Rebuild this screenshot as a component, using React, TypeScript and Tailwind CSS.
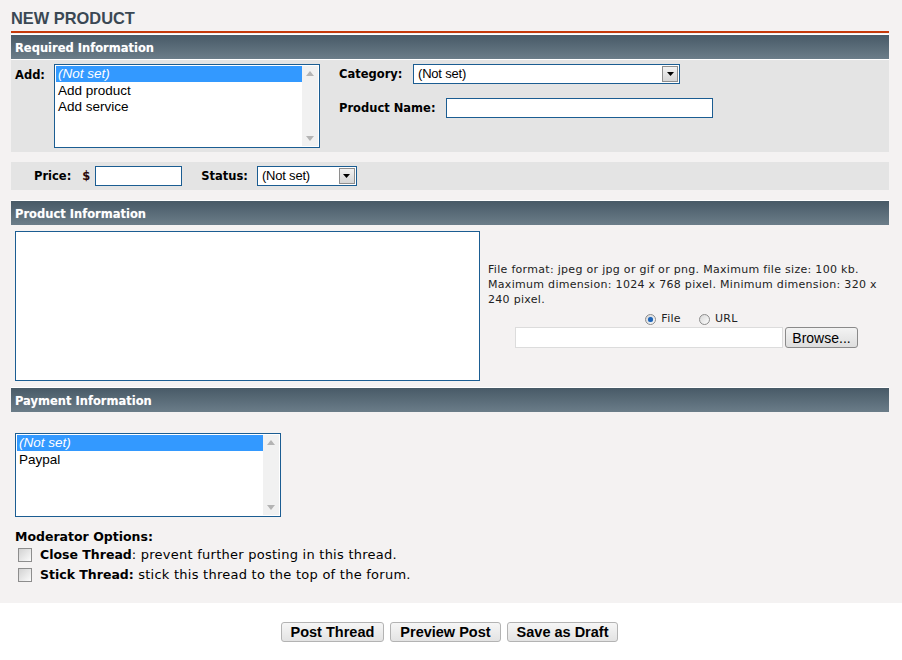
const verdana = "font-['DejaVu_Sans',Verdana,sans-serif]";
const arial = "font-['Liberation_Sans',Arial,sans-serif]";

function SectionHeader({ title }: { title: string }) {
  return (
    <div className="h-[25px] border-t border-white bg-gradient-to-b from-[#485a67] to-[#6b7d89] flex items-center pl-[4px] pt-[3px]">
      <span className={`${verdana} text-[11.5px] font-bold text-white [text-shadow:0_0_1px_rgba(255,255,255,0.35)]`}>
        {title}
      </span>
    </div>
  );
}

function ListBox({ items, className }: { items: string[]; className?: string }) {
  return (
    <div className={`w-[266px] h-[84px] border border-[#1b5d92] bg-white flex p-[1px] ${className ?? ""}`}>
      <div className={`${arial} flex-1 text-[13.5px] leading-[16px]`}>
        {items.map((it, i) =>
          i === 0 ? (
            <div key={it} className="bg-[#3399ff] text-white italic pl-[2px] h-[16px]">
              {it}
            </div>
          ) : (
            <div key={it} className="text-black pl-[2px] h-[16px] pt-[1px]">
              {it}
            </div>
          )
        )}
      </div>
      <div className="w-[16px] bg-[#f1f1f1] flex flex-col justify-between items-center py-[5px]">
        <svg width="8" height="5" viewBox="0 0 8 5">
          <path d="M0 5 L4 0 L8 5 Z" fill="#b4b4b4" />
        </svg>
        <svg width="8" height="5" viewBox="0 0 8 5">
          <path d="M0 0 L4 5 L8 0 Z" fill="#b4b4b4" />
        </svg>
      </div>
    </div>
  );
}

function Select({ width }: { width: string }) {
  return (
    <div className={`${width} h-[20px] border border-[#1b5d92] bg-white flex p-[1px]`}>
      <div className={`${arial} flex-1 text-[13px] leading-[16px] text-black pl-[3px] tracking-[-0.2px]`}>(Not set)</div>
      <div className="w-[16px] h-full bg-gradient-to-b from-[#f2f2f2] to-[#d6d6d6] border border-[#8e8e8e] flex items-center justify-center">
        <svg width="7" height="4" viewBox="0 0 7 4">
          <path d="M0 0 L7 0 L3.5 4 Z" fill="#000" />
        </svg>
      </div>
    </div>
  );
}

function Checkbox() {
  return (
    <div className="w-[14px] h-[14px] border border-[#8d8d8d] bg-gradient-to-br from-[#d2d2d2] to-[#fbfbfb] shrink-0" />
  );
}

function Radio({ checked }: { checked?: boolean }) {
  return (
    <div className="w-[11px] h-[11px] rounded-full border border-[#8c8c8c] bg-gradient-to-br from-[#d8d8d8] to-[#fdfdfd] flex items-center justify-center">
      {checked && <div className="w-[5px] h-[5px] rounded-full bg-[#1f63b5] shadow-[0_0_1px_#6aa8ea]" />}
    </div>
  );
}

function Button({ label }: { label: string }) {
  return (
    <button className={`${arial} h-[20px] px-[9px] rounded-[3px] border border-[#b3b3b3] bg-gradient-to-b from-[#f6f6f6] to-[#e3e3e3] text-[14.5px] font-bold leading-[18px] text-black`}>
      {label}
    </button>
  );
}

export default function App() {
  return (
    <div className="w-[902px] min-h-[660px] bg-white">
      <div className="bg-[#f4f2f2] pl-[11px] pr-[13px] pt-[9px] pb-[18px]">
        <h1 className={`${arial} text-[16.4px] font-bold leading-[18px] text-[#3a4854]`}>NEW PRODUCT</h1>
        <div className="h-[2px] bg-[#c63a0b] mt-[4px]" />
        <div className="mt-[1px]">
          <SectionHeader title="Required Information" />
        </div>
        <div className="bg-[#e4e4e4] border-t border-white flex pt-[4px] pb-[4px] pl-[4px]">
          <span className={`${verdana} text-[11.5px] font-bold text-black mt-[3px] w-[39px]`}>Add:</span>
          <ListBox items={["(Not set)", "Add product", "Add service"]} />
          <div className="ml-[19px] flex flex-col gap-[14px]">
            <div className="flex items-center">
              <span className={`${verdana} text-[11.5px] font-bold text-black w-[74px] pt-[1px]`}>Category:</span>
              <Select width="w-[267px]" />
            </div>
            <div className="flex items-center">
              <span className={`${verdana} text-[11.5px] font-bold text-black w-[107px] pt-[1px]`}>Product Name:</span>
              <div className="w-[267px] h-[20px] border border-[#1b5d92] bg-white" />
            </div>
          </div>
        </div>

        <div className="mt-[10px] bg-[#e4e4e4] h-[28px] flex items-center pl-[23px]">
          <span className={`${verdana} text-[11.5px] font-bold text-black pt-[1px]`}>Price:</span>
          <span className={`${verdana} text-[11.5px] font-bold text-[#2a0808] ml-[11px] pt-[1px]`}>$</span>
          <div className="w-[87px] h-[20px] border border-[#1b5d92] bg-white ml-[5px]" />
          <span className={`${verdana} text-[11.5px] font-bold text-black ml-[19px] pt-[1px]`}>Status:</span>
          <div className="ml-[9px]">
            <Select width="w-[100px]" />
          </div>
        </div>

        <div className="mt-[10px]">
          <SectionHeader title="Product Information" />
        </div>
        <div className="flex pt-[6px] pl-[4px]">
          <div className="w-[465px] h-[150px] border border-[#1b5d92] bg-white shrink-0" />
          <div className="flex-1 ml-[8px] pt-[31px] flex flex-col">
            <p className={`${verdana} text-[11px] leading-[15px] tracking-[0.3px] text-[#222] whitespace-nowrap`}>
              File format: jpeg or jpg or gif or png. Maximum file size: 100 kb.
              <br />
              Maximum dimension: 1024 x 768 pixel. Minimum dimension: 320 x
              <br />
              240 pixel.
            </p>
            <div className="flex items-center justify-center gap-[5px] mt-[4px] h-[16px] pl-[6px]">
              <Radio checked />
              <span className={`${verdana} text-[11px] tracking-[0.3px] text-[#222]`}>File</span>
              <span className="w-[8px]" />
              <Radio />
              <span className={`${verdana} text-[11px] tracking-[0.3px] text-[#222]`}>URL</span>
            </div>
            <div className="flex justify-center gap-[2px] pr-[4px]">
              <div className="w-[268px] h-[21px] border border-[#dcdcdc] bg-white" />
              <button className={`${arial} w-[73px] h-[21px] rounded-[3px] border border-[#8a8a8a] bg-gradient-to-b from-[#f3f3f3] to-[#dedede] text-[14px] leading-[18px] text-black`}>
                Browse...
              </button>
            </div>
          </div>
        </div>

        <div className="mt-[6px]">
          <SectionHeader title="Payment Information" />
        </div>
        <div className="pl-[4px] pt-[21px]">
          <ListBox items={["(Not set)", "Paypal"]} />
        </div>
        <div className="pl-[4px] mt-[11px]">
          <p className={`${verdana} text-[12.5px] font-bold leading-[17px] text-black`}>Moderator Options:</p>
          <div className="flex items-center h-[20px] pl-[3px]">
            <Checkbox />
            <span className={`${verdana} text-[13px] tracking-[0.25px] text-black ml-[8px]`}>
              <b className="text-[12.5px] tracking-normal">Close Thread</b>: prevent further posting in this thread.
            </span>
          </div>
          <div className="flex items-center h-[20px] pl-[3px]">
            <Checkbox />
            <span className={`${verdana} text-[13px] tracking-[0.25px] text-black ml-[8px]`}>
              <b className="text-[12.5px] tracking-normal">Stick Thread:</b> stick this thread to the top of the forum.
            </span>
          </div>
        </div>
      </div>

      <div className="flex justify-center gap-[6px] pt-[19px] pr-[3px]">
        <Button label="Post Thread" />
        <Button label="Preview Post" />
        <Button label="Save as Draft" />
      </div>
    </div>
  );
}
